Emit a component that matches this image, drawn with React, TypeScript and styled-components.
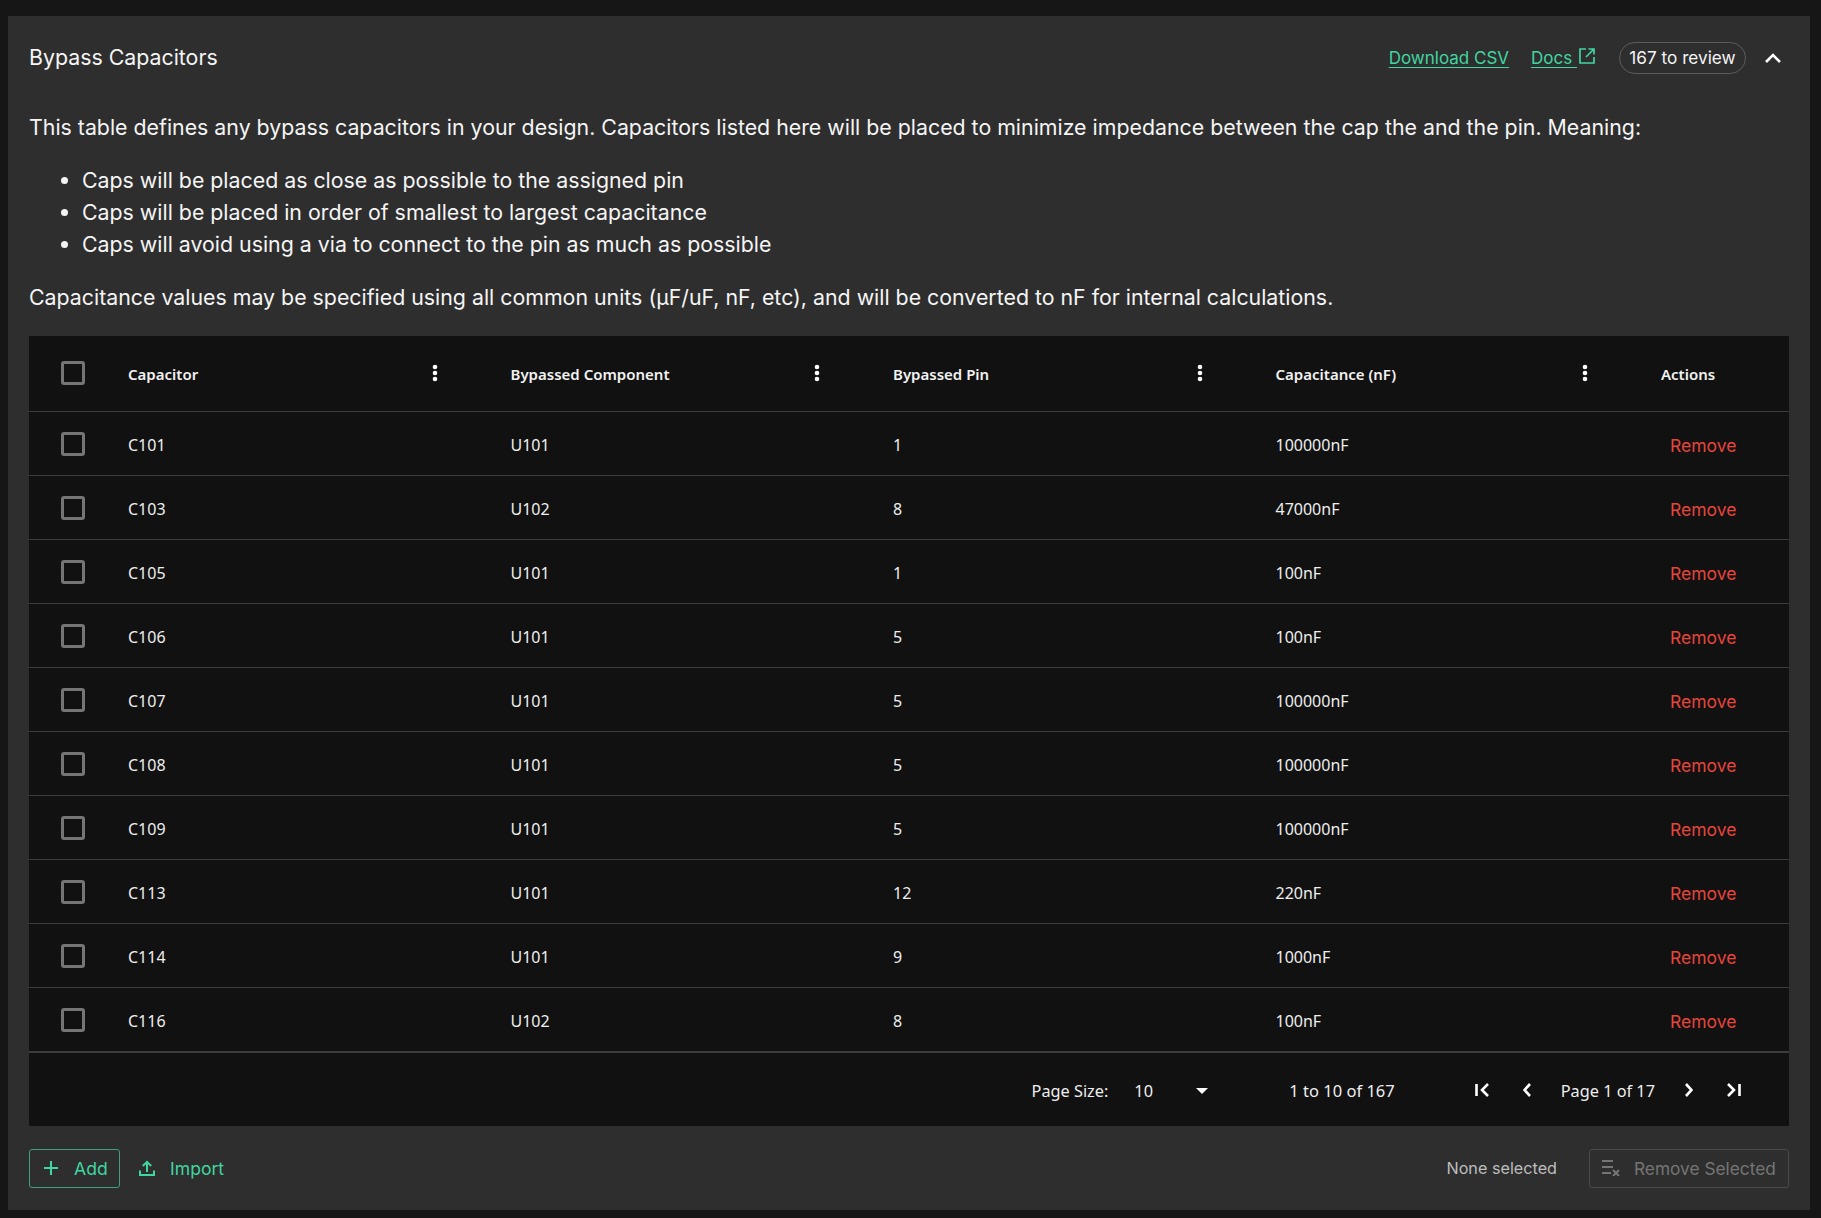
import React from "react";
import styled, { createGlobalStyle } from "styled-components";

const Global = createGlobalStyle`
  html, body { margin: 0; padding: 0; background: #161616; }
  body { font-family: Inter, "Liberation Sans", sans-serif; color: #f2f2f2; }
  * { box-sizing: border-box; }
`;
const Page = styled.div`
  width: 1821px; height: 1218px; padding: 16px 11px 8px 8px; background: #161616; overflow: hidden;
`;
const Card = styled.section`
  height: 1194px; background: #2e2e2e; padding: 0 21px; display: flex; flex-direction: column;
`;
const Header = styled.header`
  height: 83px; flex: none; display: flex; align-items: center; justify-content: space-between;
`;
const Title = styled.h2`
  margin: -2px 0 0; font-size: 21.33px; font-weight: 400; color: #f5f5f5;
`;
const HeaderActions = styled.div`
  display: flex; align-items: center;
`;
const GreenLink = styled.a<{ $gap?: number }>`
  color: #40d6a0; font-size: 17px; text-decoration: underline; text-underline-offset: 3px; text-decoration-thickness: 1px;
  margin-right: ${(p) => p.$gap ?? 0}px; display: inline-flex; align-items: center; white-space: pre;
`;
const LinkIcon = styled.svg`
  margin-left: 2px; margin-top: -3px;
`;
const Pill = styled.span`
  margin-left: 24px; height: 32px; width: 127px; display: flex; align-items: center; justify-content: center;
  border: 1px solid #5c5c5c; border-radius: 16px; font-size: 17.2px; color: #f5f5f5;
`;
const Chevron = styled.svg`
  margin-left: 18px; margin-right: 7px; display: block;
`;
const Desc = styled.div`
  margin-top: 12px; font-size: 21.33px; line-height: 32px; color: #f5f5f5; flex: none;
`;
const Para = styled.p`
  margin: 0;
`;
const List = styled.ul`
  margin: 21px 0; padding-left: 53px;
`;
const TableWrap = styled.div`
  margin-top: 23px; height: 790px; flex: none; background: #111111; display: flex; flex-direction: column;
`;
const Row = styled.div<{ $head?: boolean }>`
  display: grid; grid-template-columns: 99px repeat(4, 382.5px) 131px;
  height: ${(p) => (p.$head ? "76px" : "64px")};
  border-bottom: 1px solid #3d3d3d;
  align-items: center; flex: none;
`;
const CheckCell = styled.div<{ $head?: boolean }>`
  padding-left: 32px; display: flex; align-items: center; margin-top: ${(p) => (p.$head ? "-2px" : "1px")};
`;
const Check = styled.span`
  width: 24px; height: 24px; border: 3px solid #757575; border-radius: 3px; display: block;
`;
const HeadCell = styled.div<{ $pr?: number }>`
  font-family: "Noto Sans", "Open Sans", sans-serif; font-weight: 600; font-size: 15px; color: #f2f2f2;
  display: flex; align-items: center; justify-content: space-between; padding-right: ${(p) => p.$pr ?? 73}px;
`;
const ActionsHead = styled(HeadCell)`
  padding: 0 0 0 3px;
`;
const Kebab = styled.svg`
  display: block; margin-top: -2px;
`;
const Cell = styled.div`
  margin-top: 3px; font-family: "Noto Sans", "Open Sans", sans-serif; font-size: 16px; color: #eeeeee;
`;
const RemoveCell = styled.div`
  padding-left: 12px; margin-top: 3px; font-family: Inter, sans-serif; font-size: 17.5px; color: #e5453a;
`;
const Footer = styled.div`
  height: 74px; border-top: 1px solid #3d3d3d; display: flex; align-items: center; justify-content: flex-end;
  font-family: "Noto Sans", "Open Sans", sans-serif; font-size: 16.3px; color: #eeeeee; padding: 2px 48px 0 0;
`;
const PageSizeLabel = styled.span``;
const SizeSelect = styled.span`
  margin-left: 26px; width: 74px; display: flex; align-items: center; justify-content: space-between;
`;
const Range = styled.span`
  margin-left: 81px; font-size: 16.5px;
`;
const NavGroup = styled.div`
  margin-left: 80px; display: flex; align-items: center;
`;
const NavBtn = styled.svg<{ $ml?: number }>`
  display: block; margin-left: ${(p) => p.$ml ?? 0}px; margin-top: -2px;
`;
const PageText = styled.span`
  margin: 0 30px;
`;
const Bottom = styled.div`
  flex: 1; display: flex; align-items: center; justify-content: space-between;
`;
const BottomSide = styled.div`
  display: flex; align-items: center;
`;
const AddButton = styled.button`
  height: 39px; width: 91px; background: transparent; border: 1px solid #3f9f80; border-radius: 3px;
  color: #40d6a0; font: 400 17.6px Inter, sans-serif; display: flex; align-items: center; padding: 0 0 0 14px; gap: 16px;
`;
const ImportButton = styled.button`
  margin-left: 19px; height: 39px; background: transparent; border: 0; padding: 0;
  color: #40d6a0; font: 400 17.6px Inter, sans-serif; display: flex; align-items: center; gap: 15px;
`;
const Selected = styled.span`
  font-size: 16.2px; color: #bdbdbd; margin-right: 32px;
`;
const RemoveSelected = styled.button`
  height: 39px; width: 200px; background: transparent; border: 1px solid #4a4a4a; border-radius: 3px;
  color: #757575; font: 400 17.3px Inter, sans-serif; display: flex; align-items: center; padding: 0 0 0 12px; gap: 14px;
`;

const rows = [
  ["C101", "U101", "1", "100000nF"],
  ["C103", "U102", "8", "47000nF"],
  ["C105", "U101", "1", "100nF"],
  ["C106", "U101", "5", "100nF"],
  ["C107", "U101", "5", "100000nF"],
  ["C108", "U101", "5", "100000nF"],
  ["C109", "U101", "5", "100000nF"],
  ["C113", "U101", "12", "220nF"],
  ["C114", "U101", "9", "1000nF"],
  ["C116", "U102", "8", "100nF"],
];
const heads = [
  { label: "Capacitor", pr: 73 },
  { label: "Bypassed Component", pr: 73 },
  { label: "Bypassed Pin", pr: 73 },
  { label: "Capacitance (nF)", pr: 70.5 },
];

const Dots = () => (
  <Kebab width="6" height="18" viewBox="0 0 6 18" fill="#fff">
    <circle cx="3" cy="3" r="2.3" />
    <circle cx="3" cy="9" r="2.3" />
    <circle cx="3" cy="15" r="2.3" />
  </Kebab>
);

const Nav = ({ d, ml, w }: { d: string; ml?: number; w: number }) => (
  <NavBtn $ml={ml} width={w} height="14" viewBox={`0 0 ${w} 14`} fill="none" stroke="#fff" strokeWidth="2.6">
    <path d={d} />
  </NavBtn>
);

export default function App() {
  return (
    <Page>
      <Global />
      <Card>
        <Header>
          <Title>Bypass Capacitors</Title>
          <HeaderActions>
            <GreenLink $gap={22}>Download CSV</GreenLink>
            <GreenLink>
              {"Docs "}
              <LinkIcon width="16" height="16" viewBox="0 0 16 16" fill="none" stroke="#40d6a0" strokeWidth="1.7">
                <path d="M7 1H1v14h14V9" />
                <path d="M9.500 1H15v5.500M15 1 7 9" />
              </LinkIcon>
            </GreenLink>
            <Pill>167 to review</Pill>
            <Chevron width="18" height="12" viewBox="0 0 18 12" fill="none" stroke="#fff" strokeWidth="2.6">
              <path d="M2 10l7-7 7 7" />
            </Chevron>
          </HeaderActions>
        </Header>
        <Desc>
          <Para>
            This table defines any bypass capacitors in your design. Capacitors listed here will be placed to minimize impedance between the cap the and the pin. Meaning:
          </Para>
          <List>
            <li>Caps will be placed as close as possible to the assigned pin</li>
            <li>Caps will be placed in order of smallest to largest capacitance</li>
            <li>Caps will avoid using a via to connect to the pin as much as possible</li>
          </List>
          <Para>
            Capacitance values may be specified using all common units (µF/uF, nF, etc), and will be converted to nF for internal calculations.
          </Para>
        </Desc>
        <TableWrap>
          <Row $head>
            <CheckCell $head><Check /></CheckCell>
            {heads.map((h) => (
              <HeadCell key={h.label} $pr={h.pr}>
                <span>{h.label}</span>
                <Dots />
              </HeadCell>
            ))}
            <ActionsHead>Actions</ActionsHead>
          </Row>
          {rows.map((r) => (
            <Row key={r[0]}>
              <CheckCell><Check /></CheckCell>
              {r.map((c, i) => (
                <Cell key={i}>{c}</Cell>
              ))}
              <RemoveCell>Remove</RemoveCell>
            </Row>
          ))}
          <Footer>
            <PageSizeLabel>Page Size:</PageSizeLabel>
            <SizeSelect>
              10
              <svg width="12" height="6" viewBox="0 0 12 6" fill="#fff"><path d="M0 0h12L6 6z" /></svg>
            </SizeSelect>
            <Range>1 to 10 of 167</Range>
            <NavGroup>
              <Nav w={14} d="M1.500 1v12M13 1L7 7l6 6" />
              <Nav w={8} ml={34} d="M7 1L1.500 7 7 13" />
              <PageText>Page 1 of 17</PageText>
              <Nav w={8} d="M1 1l5.500 6L1 13" />
              <Nav w={14} ml={34} d="M1 1l6 6-6 6M12.500 1v12" />
            </NavGroup>
          </Footer>
        </TableWrap>
        <Bottom>
          <BottomSide>
            <AddButton>
              <svg width="14" height="14" viewBox="0 0 14 14" fill="none" stroke="#40d6a0" strokeWidth="2"><path d="M7 0v14M0 7h14" /></svg>
              Add
            </AddButton>
            <ImportButton>
              <svg width="16" height="16" viewBox="0 0 16 16" fill="none" stroke="#40d6a0" strokeWidth="2"><path d="M1 10.500V15h14v-4.500M8 12V2M3.800 6L8 1.800 12.200 6" /></svg>
              Import
            </ImportButton>
          </BottomSide>
          <BottomSide>
            <Selected>None selected</Selected>
            <RemoveSelected>
              <svg width="18" height="16" viewBox="0 0 18 16" fill="none" stroke="#757575" strokeWidth="2"><path d="M0 1h11M0 7h11M0 13h9" /><path d="M11 10l6 6M17 10l-6 6" /></svg>
              Remove Selected
            </RemoveSelected>
          </BottomSide>
        </Bottom>
      </Card>
    </Page>
  );
}
